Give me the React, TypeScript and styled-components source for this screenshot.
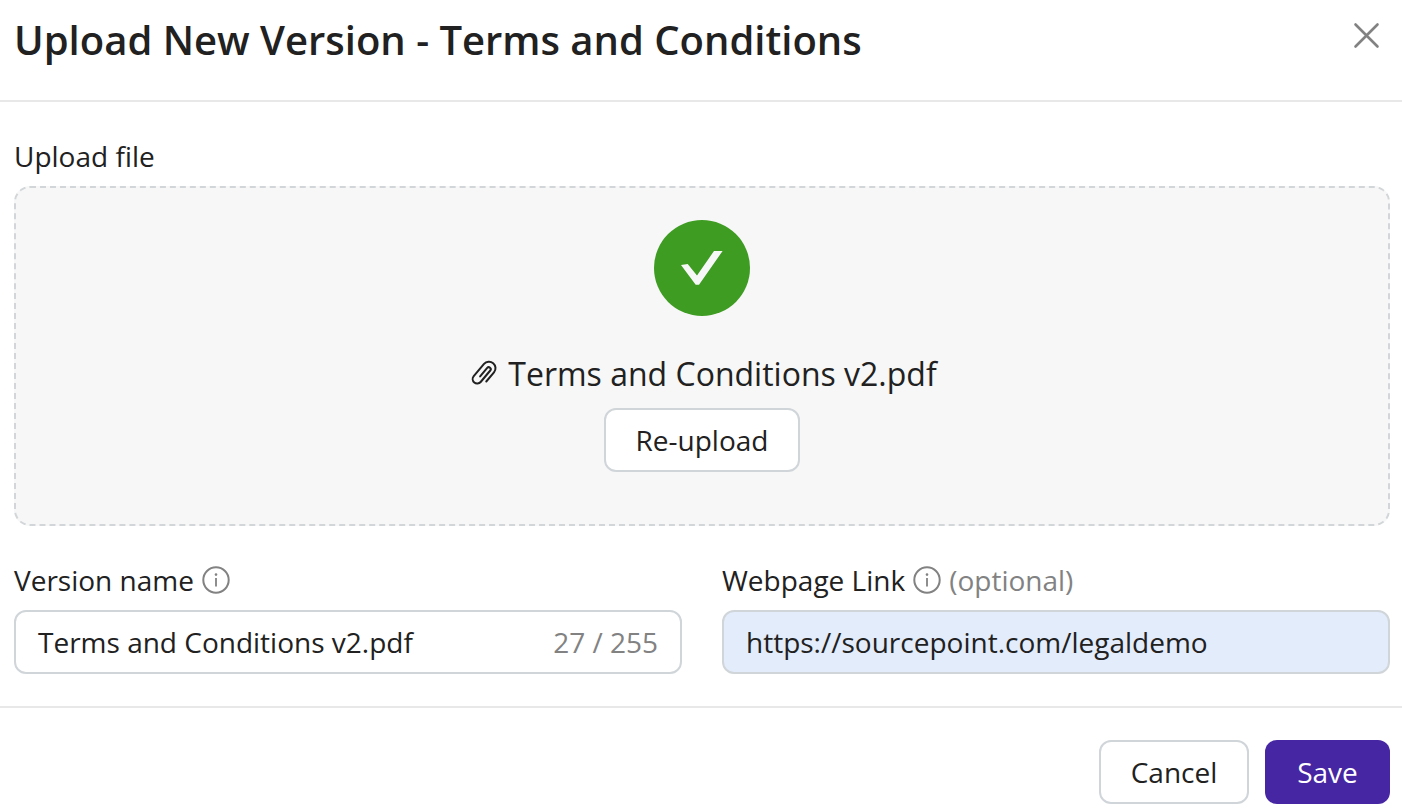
import React from "react";
import styled, { createGlobalStyle } from "styled-components";

const Global = createGlobalStyle`
  html, body { margin: 0; padding: 0; background: #fff; }
  body { font-family: "Open Sans", "Liberation Sans", sans-serif; color: #212121; }
  * { box-sizing: border-box; }
`;

const Modal = styled.div`
  width: 1402px;
  height: 811px;
  overflow: hidden;
  background: #fff;
  display: flex;
  flex-direction: column;
`;

const Header = styled.header`
  height: 102px;
  border-bottom: 2px solid #e8e8e8;
  padding: 0 22px 21px 14px;
  display: flex;
  align-items: center;
  justify-content: space-between;
`;

const Title = styled.h1`
  margin: 0;
  font-size: 40px;
  line-height: 54px;
  font-weight: 600;
  color: #212121;
`;

const CloseButton = styled.button`
  border: 0;
  background: none;
  padding: 0;
  width: 28px;
  height: 28px;
  margin-bottom: 10px;
  display: flex;
`;

const Body = styled.main`
  height: 606px;
  padding: 35px 12px 0 14px;
  border-bottom: 2px solid #e8e8e8;
  display: flex;
  flex-direction: column;
`;

const Label = styled.label`
  display: flex;
  align-items: center;
  gap: 8px;
  height: 38px;
  font-size: 28px;
  line-height: 38px;
  color: #212121;
`;

const Optional = styled.span`
  color: #828282;
`;

const DropZone = styled.div`
  margin-top: 11px;
  height: 340px;
  background: #f7f7f7;
  border: 2px dashed #d2d6d9;
  border-radius: 16px;
  display: flex;
  flex-direction: column;
  align-items: center;
  padding-top: 32px;
`;

const SuccessBadge = styled.div`
  width: 96px;
  height: 96px;
  border-radius: 50%;
  background: #3f9c23;
  display: flex;
  align-items: center;
  justify-content: center;
`;

const FileName = styled.div`
  margin-top: 36px;
  display: flex;
  align-items: center;
  gap: 9px;
  height: 44px;
  font-size: 32px;
  line-height: 44px;
  color: #212121;
`;

const OutlineButton = styled.button<{ $w: number }>`
  height: 64px;
  border: 2px solid #d0d5d9;
  border-radius: 12px;
  background: #fff;
  font-family: inherit;
  font-size: 28px;
  color: #212121;
  padding: 0;
  width: ${(p) => p.$w}px;
`;

const ReuploadButton = styled(OutlineButton)`
  margin-top: 12px;
`;

const FieldRow = styled.div`
  margin-top: 35px;
  display: grid;
  grid-template-columns: 668px 668px;
  column-gap: 40px;
`;

const Field = styled.div`
  display: flex;
  flex-direction: column;
  gap: 11px;
`;

const InputBox = styled.div<{ $filled?: boolean }>`
  height: 64px;
  border: 2px solid #d0d5d9;
  border-radius: 12px;
  background: ${(p) => (p.$filled ? "#e3ecfb" : "#fff")};
  padding: 0 22px;
  display: flex;
  align-items: center;
  justify-content: space-between;
  font-size: 28px;
  color: #212121;
`;

const Counter = styled.span`
  color: #828282;
`;

const Footer = styled.footer`
  padding: 32px 12px 0 0;
  display: flex;
  justify-content: flex-end;
  gap: 16px;
`;

const PrimaryButton = styled.button`
  width: 125px;
  height: 64px;
  border: 0;
  border-radius: 12px;
  background: #4626a3;
  color: #fff;
  font-family: inherit;
  font-size: 28px;
  padding: 0;
`;

const InfoIcon = () => (
  <svg width="28" height="28" viewBox="0 0 28 28" fill="none">
    <circle cx="14" cy="14" r="12.7" stroke="#828282" strokeWidth="2" />
    <circle cx="14" cy="8.6" r="1.3" fill="#828282" />
    <path d="M14 12v8.5" stroke="#828282" strokeWidth="1.8" />
  </svg>
);

const ClipIcon = () => (
  <svg width="32" height="32" viewBox="0 0 32 32" fill="none">
    <path
      d="M6.5 4V-8A6.5 6.5 0 0 0-6.5-8V8A4.5 4.5 0 0 0 2.5 8V-7A2 2 0 0 0-1.5-7V4"
      stroke="#212121"
      strokeWidth="2"
      strokeLinecap="round"
      transform="translate(17.5 15.5) rotate(40) translate(0 1)"
    />
  </svg>
);

export default function App() {
  return (
    <Modal>
      <Global />
      <Header>
        <Title>Upload New Version - Terms and Conditions</Title>
        <CloseButton aria-label="Close">
          <svg width="28" height="28" viewBox="0 0 28 28" fill="none">
            <path d="M3.5 3.5l22 22M25.5 3.5l-22 22" stroke="#828282" strokeWidth="2.6" strokeLinecap="round" />
          </svg>
        </CloseButton>
      </Header>
      <Body>
        <Label>Upload file</Label>
        <DropZone>
          <SuccessBadge>
            <svg width="42" height="34" viewBox="0 0 42 34" fill="#f7f7f7">
              <path d="M0 14L6.7 13 16 24.4 33 0H41.6L18 33.7H14.7Z" />
            </svg>
          </SuccessBadge>
          <FileName>
            <ClipIcon />
            Terms and Conditions v2.pdf
          </FileName>
          <ReuploadButton $w={196}>Re-upload</ReuploadButton>
        </DropZone>
        <FieldRow>
          <Field>
            <Label>
              Version name <InfoIcon />
            </Label>
            <InputBox>
              Terms and Conditions v2.pdf
              <Counter>27 / 255</Counter>
            </InputBox>
          </Field>
          <Field>
            <Label>
              Webpage Link <InfoIcon /> <Optional>(optional)</Optional>
            </Label>
            <InputBox $filled>https://sourcepoint.com/legaldemo</InputBox>
          </Field>
        </FieldRow>
      </Body>
      <Footer>
        <OutlineButton $w={150}>Cancel</OutlineButton>
        <PrimaryButton>Save</PrimaryButton>
      </Footer>
    </Modal>
  );
}
